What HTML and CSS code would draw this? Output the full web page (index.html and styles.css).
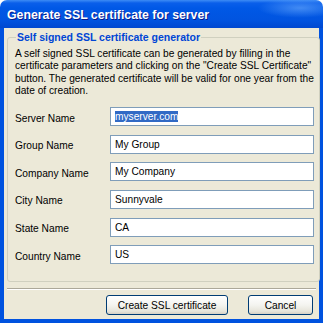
FILE: index.html
```html
<!DOCTYPE html>
<html lang="en">
<head>
    <meta charset="UTF-8">
    <meta name="viewport" content="width=device-width, initial-scale=1.0">
    <title>Generate SSL certificate for server</title>
    <link rel="stylesheet" href="styles.css">
</head>
<body>
    <div class="window">
        <div class="title-bar">Generate SSL certificate for server</div>

        <div class="window-body">
            <fieldset class="group">
                <legend>Self signed SSL certificate generator</legend>
                <p class="intro">A self signed SSL certificate can be generated by filling in the<br>
                certificate parameters and clicking on the "Create SSL Certificate"<br>
                button. The generated certificate will be valid for one year from the<br>
                date of creation.</p>

                <div class="form-grid">
                    <label>Server Name</label>
                    <div class="field"><span class="selected">myserver.com</span></div>

                    <label>Group Name</label>
                    <div class="field">My Group</div>

                    <label>Company Name</label>
                    <div class="field">My Company</div>

                    <label>City Name</label>
                    <div class="field">Sunnyvale</div>

                    <label>State Name</label>
                    <div class="field">CA</div>

                    <label>Country Name</label>
                    <div class="field">US</div>
                </div>
            </fieldset>

            <div class="separator"></div>

            <div class="buttons">
                <button class="btn btn-create">Create SSL certificate</button>
                <button class="btn btn-cancel">Cancel</button>
            </div>
        </div>
    </div>
</body>
</html>
```

FILE: styles.css
```css
* {
    margin: 0;
    padding: 0;
    box-sizing: border-box;
}

body {
    font-family: "Liberation Sans", Arial, sans-serif;
    font-size: 10.2px;
    color: #000;
    background-color: #fff;
}

.window {
    width: 323px;
    height: 323px;
    display: flex;
    flex-direction: column;
}

/* XP style blue caption */
.title-bar {
    height: 28px;
    padding: 2px 0 0 7px;
    display: flex;
    align-items: center;
    color: #fff;
    font-weight: bold;
    font-size: 12.3px;
    text-shadow: 1px 1px 0 #0a1a8a;
    border-radius: 7px 7px 0 0;
    background:
        radial-gradient(ellipse 60px 14px at 300px 8px, rgba(120, 180, 255, 0.55), transparent 70%),
        linear-gradient(to bottom, #3d8cf5 0px, #0a5fea 3px, #0058e6 8px, #0154e0 20px, #0048d0 28px);
}

.window-body {
    flex: 1;
    display: flex;
    flex-direction: column;
    background-color: #ece9d8;
    border: 4px solid #0052df;
    border-top: none;
}

.group {
    margin: 3px 5px 0 3px;
    padding: 0 5px 17px 7px;
    border: 1px solid #d0d0bf;
    border-radius: 3px;
}

.group legend {
    margin-left: 1px;
    padding: 0 1px;
    font-weight: bold;
    font-size: 10.5px;
    line-height: 13px;
    color: #0046d5;
}

.intro {
    margin-top: 4px;
    line-height: 12.3px;
    white-space: nowrap;
}

.form-grid {
    display: grid;
    grid-template-columns: 95px 1fr;
    grid-auto-rows: 19px;
    row-gap: 8.6px;
    margin-top: 10px;
}

.form-grid label {
    display: flex;
    align-items: center;
    padding-top: 3px;
}

.field {
    height: 19px;
    border: 1px solid #7f9db9;
    background-color: #fff;
    padding-left: 4px;
    display: flex;
    align-items: center;
}

.selected {
    background-color: #316ac5;
    color: #fff;
}

.separator {
    margin: 6px 3px 0 3px;
    height: 2px;
    border-top: 1px solid #aca899;
    border-bottom: 1px solid #fff;
}

.buttons {
    margin-top: 5px;
    padding-right: 6px;
    display: flex;
    justify-content: flex-end;
    gap: 20px;
}

.btn {
    height: 20px;
    font-family: inherit;
    font-size: 10.2px;
    color: #000;
    border: 1px solid #003c74;
    border-radius: 3px;
    background: linear-gradient(to bottom, #fff 0%, #f4f4f0 50%, #e6e4da 85%, #d6d0c5 100%);
}

.btn-create {
    width: 122px;
}

.btn-cancel {
    width: 65px;
}
```
